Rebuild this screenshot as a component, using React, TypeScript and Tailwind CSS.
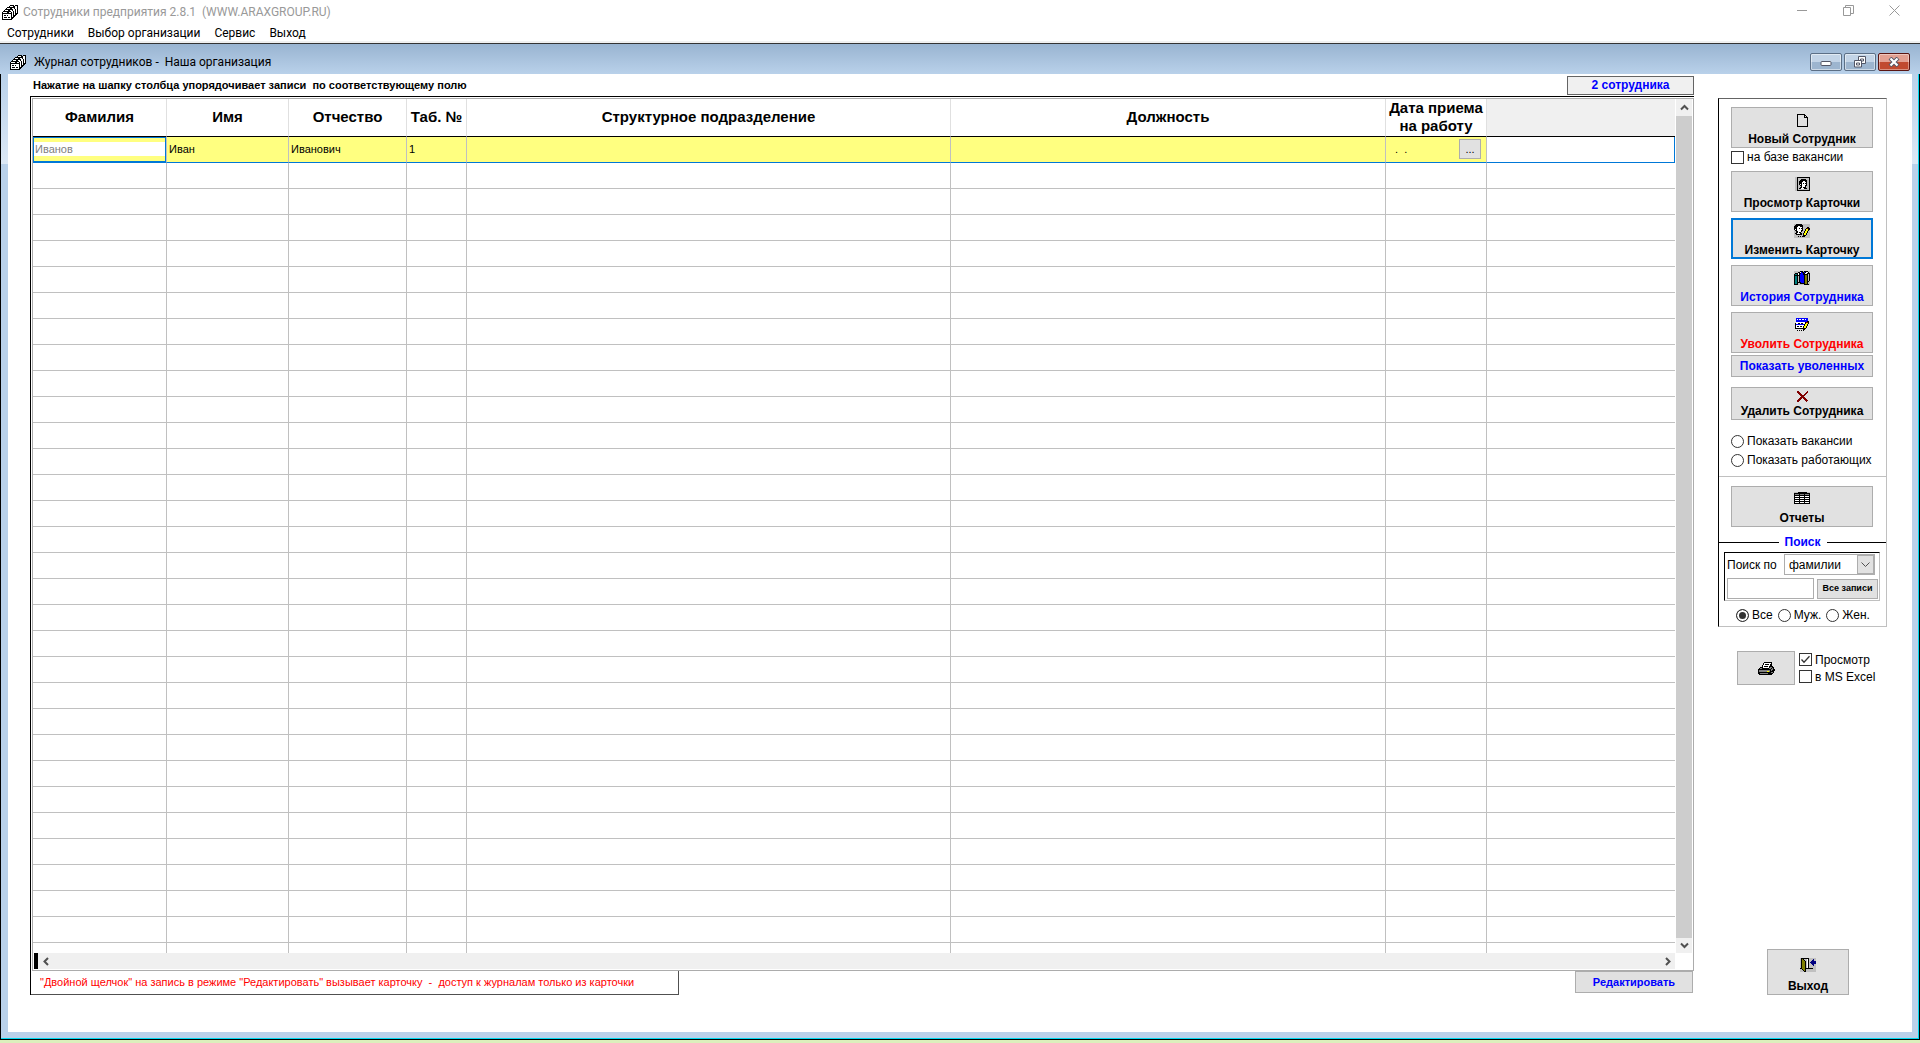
import { useState } from 'react';
import type { ReactNode } from 'react';

const palette: Record<string, string> = {
  k: '#000000',
  w: '#ffffff',
  g: '#c0c0c0',
  d: '#808080',
  b: '#0000ff',
  n: '#000080',
  t: '#008080',
  o: '#808000',
  y: '#ffff00',
  r: '#800000',
};

const cardsIcon = [
  '........kkkk.kkk',
  '.......kwwwkkwwk',
  '.....kkkkkkkkwwk',
  '....kwwwkkwwkwwk',
  '...kkkkkkkkwwkwk',
  '..kwwwkkwwkwwkwk',
  '.kkkkkkkkwwkwkwk',
  'kwwwwkkwwkwkwkwk',
  'kkkkkkkkkkwkwkkk',
  'kwwwwwwwwkwkwkk.',
  'kwkkwkwwwkwkkk..',
  'kwwwwwwwwkwkk...',
  'kwkkkwkkwkkk....',
  'kwwwwwwwwkk.....',
  'kkkkkkkkkk......',
];

const pageIcon = [
  'kkkkkkkk...',
  'k......kk..',
  'k......k.k.',
  'k......kkkk',
  'k.........k',
  'k.........k',
  'k.........k',
  'k.........k',
  'k.........k',
  'k.........k',
  'k.........k',
  'k.........k',
  'kkkkkkkkkkk',
];

const viewIcon = [
  'ggkkkkkkkkkkkkk',
  'ggkgggggggggggk',
  'ggkgggkkkkkgggk',
  'ggkggkkkkkkkggk',
  'ggkgkkkkwwkkggk',
  'ggkgkkkwwwwkggk',
  'ggkgkkkwkwkkggk',
  'ggkgkwkwwwwkggk',
  'ggkggkkwwwkkggk',
  'ggkgggkwwwkgggk',
  'ggkggkkwkkkgggk',
  'ggkgkkwwwkkkggk',
  'ggkgggggggggggk',
  'ggkkkkkkkkkkkkk',
];

const editIcon = [
  'ggkkkkkkgggggggg',
  'gkkkkkkkkggggggg',
  'kkkkwwkkkggggggg',
  'kkkwwwwwkggggkkg',
  'kkkwwkwkkgggkrkk',
  'kwkwwwwwkggkyykk',
  'gkkwwwwkkggkyykg',
  'ggkkwwwkggkyykgg',
  'ggkkwkkgggkyykgg',
  'gkkwwwkkgkyykggg',
  'ggkkkkkkgkyykggg',
  'gggggggggkkkgggg',
  'ggggkgkgkkkggggg',
  'gggggggggggggggg',
];

const booksIcon = [
  'ggggggkkkgkkkkgg',
  'ggggkkwbkkbkwwkg',
  'gkkkwkkbbkkwwkkk',
  'kttkwkbbbkkkkkgk',
  'kkkkkkbbbbkookgk',
  'kttkgkbbbbkookgk',
  'kttkgkbbbbkookgk',
  'kttkgkbbbbkookgk',
  'kttkgkbbbbkookgk',
  'kttkgkbbbbkookgk',
  'kttkgkbbbbkookkg',
  'kttkkkkbbbkookgg',
  'kttkggkkkkkookgg',
  'kkkkggggggkkkkkg',
];

const dismissIcon = [
  '.bbbbbbbbbbbb..',
  '.bwbwwbwwbwbb..',
  '.bbbbbbbbbbbb..',
  '.bbbbbbbbbbbkk.',
  '.wwwwwwwwwkrrk.',
  'kwwkkwkkwwkyyk.',
  'kbbbbbbbbkyyk..',
  'kwwwwwwwwkyyk..',
  'kwkkwkkwkyyk...',
  'kwwwwwwwkyyk...',
  'kkkkkkkkkkk....',
  '........kk.....',
  '..k.k.k.k......',
];

const crossIcon = [
  'rr........r',
  'rrr......rr',
  '.rrr....rr.',
  '..rrr..rr..',
  '...rrrrr...',
  '....rrr....',
  '...rrrrr...',
  '..rrr.rrr..',
  '.rrr...rrr.',
  'rrr.....rrr',
  'rr.......r.',
];

const tableIcon = [
  'ggggkkkkkkkkkggg',
  'kkkkkkkkkkkkkkkk',
  'kddddkddddkddddk',
  'kkkkkkkkkkkkkkkk',
  'kwwwwkwwwwkwwwwk',
  'kkkkkkkkkkkkkkkk',
  'kwwwwkwwwwkwwwwk',
  'kkkkkkkkkkkkkkkk',
  'kwwwwkwwwwkwwwwk',
  'kkkkkkkkkkkkkkkk',
  'kwwwwkwwwwkwwwwk',
  'kkkkkkkkkkkkkkkk',
];

const printerIcon = [
  '......kkkkkkkk...',
  '.....kwwwwwwwk...',
  '.....kwkkkkwkk...',
  '....kwwwwwwwkk...',
  '....kwkkkkwkkkk..',
  '..kkkwwwwwwkddkk.',
  '.kddkkkkkkkddkdk.',
  'kkkkkkkkkkkkkddkk',
  'kdddddddddddkdkkk',
  'kddddddddyydkkkk.',
  'kkkkkkkkkkkkkddk.',
  'kkddddddddkkkkk..',
  '.kkkkkkkkkkkkk...',
];

const exitIcon = [
  'gkkkkkkkkggggggg',
  'gkokgggwkggggngg',
  'gkookggwkgggnngg',
  'gkoookgwkggnnnnn',
  'gkoookgwkgnnnnnn',
  'gkoookgwkggnnnnn',
  'gkoookgwkgggnngg',
  'gkoookgwkggggngg',
  'gkoookgwkggggggg',
  'gkoookgwkggggggg',
  'kkoookkkkkkkkggg',
  'ggkookgggggggggg',
  'gggkokgggggggggg',
  'ggggkkgggggggggg',
];

function PixelIcon({ rows }: { rows: string[] }) {
  const width = rows[0].length;
  return (
    <svg
      width={width}
      height={rows.length}
      viewBox={`0 0 ${width} ${rows.length}`}
      shapeRendering="crispEdges"
      className="block shrink-0"
      aria-hidden="true"
    >
      {rows.flatMap((row, y) =>
        row.split('').map((c, x) =>
          palette[c] ? <rect key={`${x}-${y}`} x={x} y={y} width={1} height={1} fill={palette[c]} /> : null
        )
      )}
    </svg>
  );
}

function Arrow({ d }: { d: string }) {
  return (
    <svg width="9" height="9" viewBox="0 0 9 9" fill="none" stroke="#505050" strokeWidth="2" aria-hidden="true">
      <path d={d} />
    </svg>
  );
}

function CardButton({ icon, children, className = '' }: { icon: string[]; children: ReactNode; className?: string }) {
  return (
    <button
      className={`flex w-full flex-col items-center justify-between border bg-[#e1e1e1] text-[12px] leading-[14px] font-bold whitespace-nowrap ${className}`}
    >
      <PixelIcon rows={icon} />
      {children}
    </button>
  );
}

function Check({ label, defaultChecked = false }: { label: string; defaultChecked?: boolean }) {
  return (
    <label className="flex items-center gap-[3px] text-[12px] leading-[14px] whitespace-nowrap">
      <span className="relative size-[13px] shrink-0">
        <input
          type="checkbox"
          defaultChecked={defaultChecked}
          className="peer block size-[13px] appearance-none border border-[#333333] bg-white"
        />
        <svg
          viewBox="0 0 13 13"
          className="pointer-events-none absolute inset-0 hidden peer-checked:block"
          fill="none"
          stroke="#333333"
          strokeWidth="1.3"
        >
          <path d="M2.5 6.5 5 9.2 10.5 3.3" />
        </svg>
      </span>
      {label}
    </label>
  );
}

function Radio({ name, label, defaultChecked = false }: { name: string; label: string; defaultChecked?: boolean }) {
  return (
    <label className="flex items-center gap-[3px] text-[12px] leading-[14px] whitespace-nowrap">
      <input
        type="radio"
        name={name}
        defaultChecked={defaultChecked}
        className="size-[13px] shrink-0 appearance-none rounded-full border border-[#333333] bg-white checked:bg-[#333333] checked:shadow-[inset_0_0_0_2px_#ffffff]"
      />
      {label}
    </label>
  );
}

const columns = [
  { title: 'Фамилия', width: 'w-[134px]' },
  { title: 'Имя', width: 'w-[122px]' },
  { title: 'Отчество', width: 'w-[118px]' },
  { title: 'Таб. №', width: 'w-[60px]' },
  { title: 'Структурное подразделение', width: 'w-[484px]' },
  { title: 'Должность', width: '' },
  { title: 'Дата приема на работу', width: 'w-[101px]' },
];

const emptyRows = Array.from({ length: 31 }, (_, i) => i);

function EmployeeTable() {
  const [surname, setSurname] = useState('Иванов');
  const cell = 'h-[26px] border-r border-b border-r-[#c0c0c0] border-b-[#0078d7] bg-[#ffff80] p-0 pb-[2px] pl-[2px]';

  return (
    <table className="w-full table-fixed border-separate border-spacing-0 text-[11px] leading-[14px]">
      <colgroup>
        {columns.map((c) => (
          <col key={c.title} className={c.width} />
        ))}
        <col className="w-[188px]" />
      </colgroup>
      <thead>
        <tr>
          {columns.map((c) => (
            <th
              key={c.title}
              className="h-[38px] border-r border-b border-r-[#e0e0e0] border-b-black p-0 pb-px text-[15px] leading-[18px] font-bold"
            >
              {c.title}
            </th>
          ))}
          <td className="h-[38px] border-b border-black bg-[#f0f0f0] p-0" />
        </tr>
      </thead>
      <tbody>
        <tr>
          <td className="h-[26px] border-r border-b border-r-[#c0c0c0] border-b-[#0078d7] bg-[#ffff80] p-0">
            <div className="flex h-[25px] items-center border border-[#0078d7] pb-px">
              <input
                aria-label="Фамилия"
                value={surname}
                onChange={(e) => setSurname(e.target.value)}
                className="h-[14px] w-full bg-white pl-px text-[#808080] outline-none"
              />
            </div>
          </td>
          <td className={cell}>Иван</td>
          <td className={cell}>Иванович</td>
          <td className={cell}>1</td>
          <td className={cell} />
          <td className={cell} />
          <td className={cell}>
            <div className="flex items-center justify-between pr-[5px] pl-[7px]">
              <span className="whitespace-pre">.  .</span>
              <button className="h-5 w-[22px] border border-[#adadad] bg-[#e1e1e1]" aria-label="Выбрать дату">
                ...
              </button>
            </div>
          </td>
          <td className="border-r border-b border-[#0078d7] p-0" />
        </tr>
        {emptyRows.map((r) => (
          <tr key={r}>
            {columns.map((c) => (
              <td key={c.title} className="h-[26px] border-r border-b border-[#c0c0c0] p-0" />
            ))}
            <td className="h-[26px] border-b border-[#c0c0c0] p-0" />
          </tr>
        ))}
      </tbody>
    </table>
  );
}

export default function App() {
  return (
    <div className="flex h-screen flex-col bg-white font-['Liberation_Sans',Arial,sans-serif] text-black">
      {/* Application title */}
      <header className="flex h-6 shrink-0 items-center justify-between pr-5 pl-[2px] font-[Roboto,sans-serif] text-[12px] text-[#999999]">
        <div className="flex items-center gap-[5px]">
          <PixelIcon rows={cardsIcon} />
          <h1 className="whitespace-pre">Сотрудники предприятия 2.8.1  (WWW.ARAXGROUP.RU)</h1>
        </div>
        <div className="flex items-center gap-[35px] pb-1">
          <button aria-label="Свернуть">
            <svg width="11" height="11" viewBox="0 0 11 11" stroke="#999999" fill="none"><path d="M0 5.5h10" /></svg>
          </button>
          <button aria-label="Восстановить">
            <svg width="11" height="11" viewBox="0 0 11 11" stroke="#999999" fill="none"><path d="M.5 2.5h7v8h-7zM2.5 2.5v-2h8v8h-3" /></svg>
          </button>
          <button aria-label="Закрыть">
            <svg width="11" height="11" viewBox="0 0 11 11" stroke="#999999" fill="none"><path d="M.5.5l10 10M10.5.5l-10 10" /></svg>
          </button>
        </div>
      </header>
      <nav className="flex h-[19px] shrink-0 items-center gap-[14px] border-b-2 border-[#f0f0f0] pl-[7px] font-[Roboto,sans-serif] text-[12px]">
        <button>Сотрудники</button>
        <button>Выбор организации</button>
        <button>Сервис</button>
        <button>Выход</button>
      </nav>

      {/* Journal window */}
      <div className="flex shrink-0 items-center justify-between border-t border-[#333333] bg-linear-to-b from-[#99b4d1] to-[#b9d1ea] pr-[10px] pl-[10px] font-[Roboto,sans-serif] text-[12px]">
        <div className="flex h-[30px] items-center gap-2 pt-[6px]">
          <PixelIcon rows={cardsIcon} />
          <h2 className="whitespace-pre">Журнал сотрудников -  Наша организация</h2>
        </div>
        <div className="flex gap-[2px] pt-[6px]">
          <button
            aria-label="Свернуть журнал"
            className="flex h-[18px] w-8 items-center justify-center rounded-[2px] border border-[#5c6f86] bg-linear-to-b from-[#c3d4e7] from-50% to-[#9db5cf] to-50% inset-ring inset-ring-white/50"
          >
            <svg width="12" height="12" viewBox="0 0 12 12"><rect x="1" y="5.5" width="10" height="4" rx="1" fill="#fff" stroke="#535666" /></svg>
          </button>
          <button
            aria-label="Восстановить журнал"
            className="flex h-[18px] w-8 items-center justify-center rounded-[2px] border border-[#5c6f86] bg-linear-to-b from-[#c3d4e7] from-50% to-[#9db5cf] to-50% inset-ring inset-ring-white/50"
          >
            <svg width="12" height="12" viewBox="0 0 12 12" fill="#fff" stroke="#535666">
              <path d="M4.5.5h7v7h-7zM6.500 3h3v2h-3z" />
              <path d="M.5 4.500h7v6.500h-7zM2.500 7h3v2h-3z" />
            </svg>
          </button>
          <button
            aria-label="Закрыть журнал"
            className="flex h-[18px] w-8 items-center justify-center rounded-[2px] border border-[#5a1512] bg-linear-to-b from-[#e3a092] from-50% to-[#c14a30] to-50% inset-ring inset-ring-white/40"
          >
            <svg width="12" height="10" viewBox="0 0 12 10" fill="none">
              <path d="M2 1l8 8M10 1l-8 8" stroke="#535666" strokeWidth="4" />
              <path d="M2.500 1.500l7 7M9.500 1.500l-7 7" stroke="#fff" strokeWidth="2.200" />
            </svg>
          </button>
        </div>
      </div>

      <div className="flex min-h-0 flex-1 border-r border-b border-l border-black">
        <div className="flex min-w-0 flex-1 border-r border-b border-[#00d8f0] bg-[linear-gradient(#b9d1ea,#dce8f5_90px,#b9d1ea_90px)] pr-[6px] pb-[6px] pl-[7px]">
          <main className="flex min-w-0 flex-1 items-start bg-white pl-[22px]">
            <div className="flex min-w-0 flex-1 flex-col self-stretch pb-[37px]">
              <div className="flex h-[22px] shrink-0 items-center justify-between pl-[3px] text-[11px] font-bold">
                <p className="whitespace-pre">Нажатие на шапку столбца упорядочивает записи  по соответствующему полю</p>
                <output className="flex h-[19px] w-[127px] items-center justify-center border border-[#646464] bg-[#f0f0f0] text-[12px] text-[#0000ff]">
                  2 сотрудника
                </output>
              </div>

              <div className="flex min-h-0 flex-1 flex-col border-t border-l border-black">
                <div className="mt-px ml-px flex min-h-0 flex-1 flex-col border border-[#acacac]">
                  <div className="flex min-h-0 flex-1">
                    <div className="min-w-0 flex-1 overflow-hidden">
                      <EmployeeTable />
                    </div>
                    <div className="mr-px ml-px flex w-4 shrink-0 flex-col bg-[#cdcdcd]">
                      <button className="flex h-[17px] items-center justify-center bg-[#f0f0f0]" aria-label="Вверх">
                        <Arrow d="M1 6.500l3.500-3.500 3.500 3.500" />
                      </button>
                      <button className="mt-auto flex h-[15px] items-center justify-center bg-[#f0f0f0]" aria-label="Вниз">
                        <Arrow d="M1 2.500l3.500 3.500 3.500-3.500" />
                      </button>
                    </div>
                  </div>
                  <div className="mr-[18px] mb-px ml-px flex h-4 shrink-0 items-center justify-between border-l-4 border-black bg-[#f0f0f0] pr-[3px] pl-1">
                    <button aria-label="Влево">
                      <Arrow d="M6 1l-3.500 3.500 3.500 3.500" />
                    </button>
                    <button aria-label="Вправо">
                      <Arrow d="M3 1l3.500 3.500-3.500 3.500" />
                    </button>
                  </div>
                </div>
                <div className="flex h-6 shrink-0 items-start justify-between pr-px">
                  <p className="flex h-6 w-[648px] items-center border-r border-b border-[#505050] pl-[9px] text-[11px] whitespace-pre text-[#ff0000]">
                    "Двойной щелчок" на запись в режиме "Редактировать" вызывает карточку  -  доступ к журналам только из карточки
                  </p>
                  <button className="h-[22px] w-[118px] border border-[#adadad] bg-[#e1e1e1] text-[11px] font-bold text-[#0000ff]">
                    Редактировать
                  </button>
                </div>
              </div>
            </div>

            {/* Actions */}
            <aside className="mr-[25px] ml-6 flex w-[169px] shrink-0 flex-col self-stretch pt-6 pb-[37px]">
              <section className="border border-t-[#646464] border-r-[#c0c0c0] border-b-[#c0c0c0] border-l-black">
                <div className="border-b border-[#c0c0c0] pt-2 pr-[13px] pb-[9px] pl-3">
                  <CardButton icon={pageIcon} className="h-[41px] border-[#adadad] pt-[6px] pb-px">
                    Новый Сотрудник
                  </CardButton>
                  <div className="pt-[2px] pb-[7px]">
                    <Check label="на базе вакансии" />
                  </div>
                  <div className="flex flex-col gap-[6px]">
                    <CardButton icon={viewIcon} className="h-[41px] border-[#adadad] pt-[5px] pb-px">
                      Просмотр Карточки
                    </CardButton>
                    <CardButton icon={editIcon} className="h-[41px] border-2 border-[#0078d7] pt-1">
                      Изменить Карточку
                    </CardButton>
                    <CardButton icon={booksIcon} className="h-[41px] border-[#adadad] pt-[5px] pb-px text-[#0000ff]">
                      История Сотрудника
                    </CardButton>
                    <CardButton icon={dismissIcon} className="h-[41px] border-[#adadad] pt-[5px] pb-px text-[#ff0000]">
                      Уволить Сотрудника
                    </CardButton>
                  </div>
                  <button className="mt-[2px] block h-[22px] w-full border border-[#adadad] bg-[#e1e1e1] text-[12px] font-bold text-[#0000ff]">
                    Показать уволенных
                  </button>
                  <CardButton icon={crossIcon} className="mt-[10px] h-[33px] border-[#adadad] pt-[3px] pb-px">
                    Удалить Сотрудника
                  </CardButton>
                  <div className="flex flex-col gap-[5px] pt-[14px]">
                    <Radio name="show" label="Показать вакансии" />
                    <Radio name="show" label="Показать работающих" />
                  </div>
                </div>

                <div className="pt-[9px] pr-[13px] pb-[7px] pl-3">
                  <CardButton icon={tableIcon} className="h-[41px] border-[#adadad] pt-[5px] pb-px">
                    Отчеты
                  </CardButton>
                </div>

                <div className="flex h-4 items-center gap-[6px] text-[12px] leading-4 font-bold text-[#0000ff]">
                  <span className="h-px flex-1 bg-black" />
                  <h3>Поиск</h3>
                  <span className="h-px flex-1 bg-black" />
                </div>
                <div className="pt-[2px] pr-[6px] pb-1 pl-[5px]">
                  <div className="border border-t-black border-r-[#c0c0c0] border-b-[#c0c0c0] border-l-black p-px pl-[2px]">
                    <div className="flex items-center justify-between pr-[3px]">
                      <label htmlFor="search-by" className="text-[12px] whitespace-nowrap">Поиск по</label>
                      <div className="relative">
                        <select
                          id="search-by"
                          className="block h-[21px] w-[91px] appearance-none border border-[#adadad] bg-white pl-1 text-[12px]"
                        >
                          <option>фамилии</option>
                        </select>
                        <span className="pointer-events-none absolute top-px right-px flex h-[19px] w-[17px] items-center justify-center border border-[#adadad] bg-[#e1e1e1]">
                          <svg width="9" height="6" viewBox="0 0 9 6" fill="none" stroke="#505050"><path d="M.5.500l4 4 4-4" /></svg>
                        </span>
                      </div>
                    </div>
                    <div className="flex items-center justify-between gap-[3px] pt-[3px]">
                      <input aria-label="Строка поиска" className="h-[21px] min-w-0 flex-1 border border-[#adadad] bg-white px-1 text-[12px]" />
                      <button className="h-5 w-[61px] border border-[#adadad] bg-[#e1e1e1] text-[9px] font-bold whitespace-nowrap">
                        Все записи
                      </button>
                    </div>
                  </div>
                </div>
                <div className="flex gap-[5px] pt-[3px] pb-1 pl-[17px]">
                  <Radio name="sex" label="Все" defaultChecked />
                  <Radio name="sex" label="Муж." />
                  <Radio name="sex" label="Жен." />
                </div>
              </section>

              <div className="mt-6 flex items-center gap-1 pl-[19px]">
                <button
                  aria-label="Печать"
                  className="flex h-[34px] w-[58px] items-center justify-center border border-[#adadad] bg-[#e1e1e1]"
                >
                  <PixelIcon rows={printerIcon} />
                </button>
                <div className="flex flex-col gap-[3px]">
                  <Check label="Просмотр" defaultChecked />
                  <Check label="в MS Excel" />
                </div>
              </div>

              <div className="mt-auto pr-[38px] pl-[49px]">
                <CardButton icon={exitIcon} className="h-[46px] border-[#adadad] pt-2 pb-px">
                  Выход
                </CardButton>
              </div>
            </aside>
          </main>
        </div>
      </div>
      <div className="h-[3px] shrink-0 bg-[#dcefbc]" />
    </div>
  );
}
